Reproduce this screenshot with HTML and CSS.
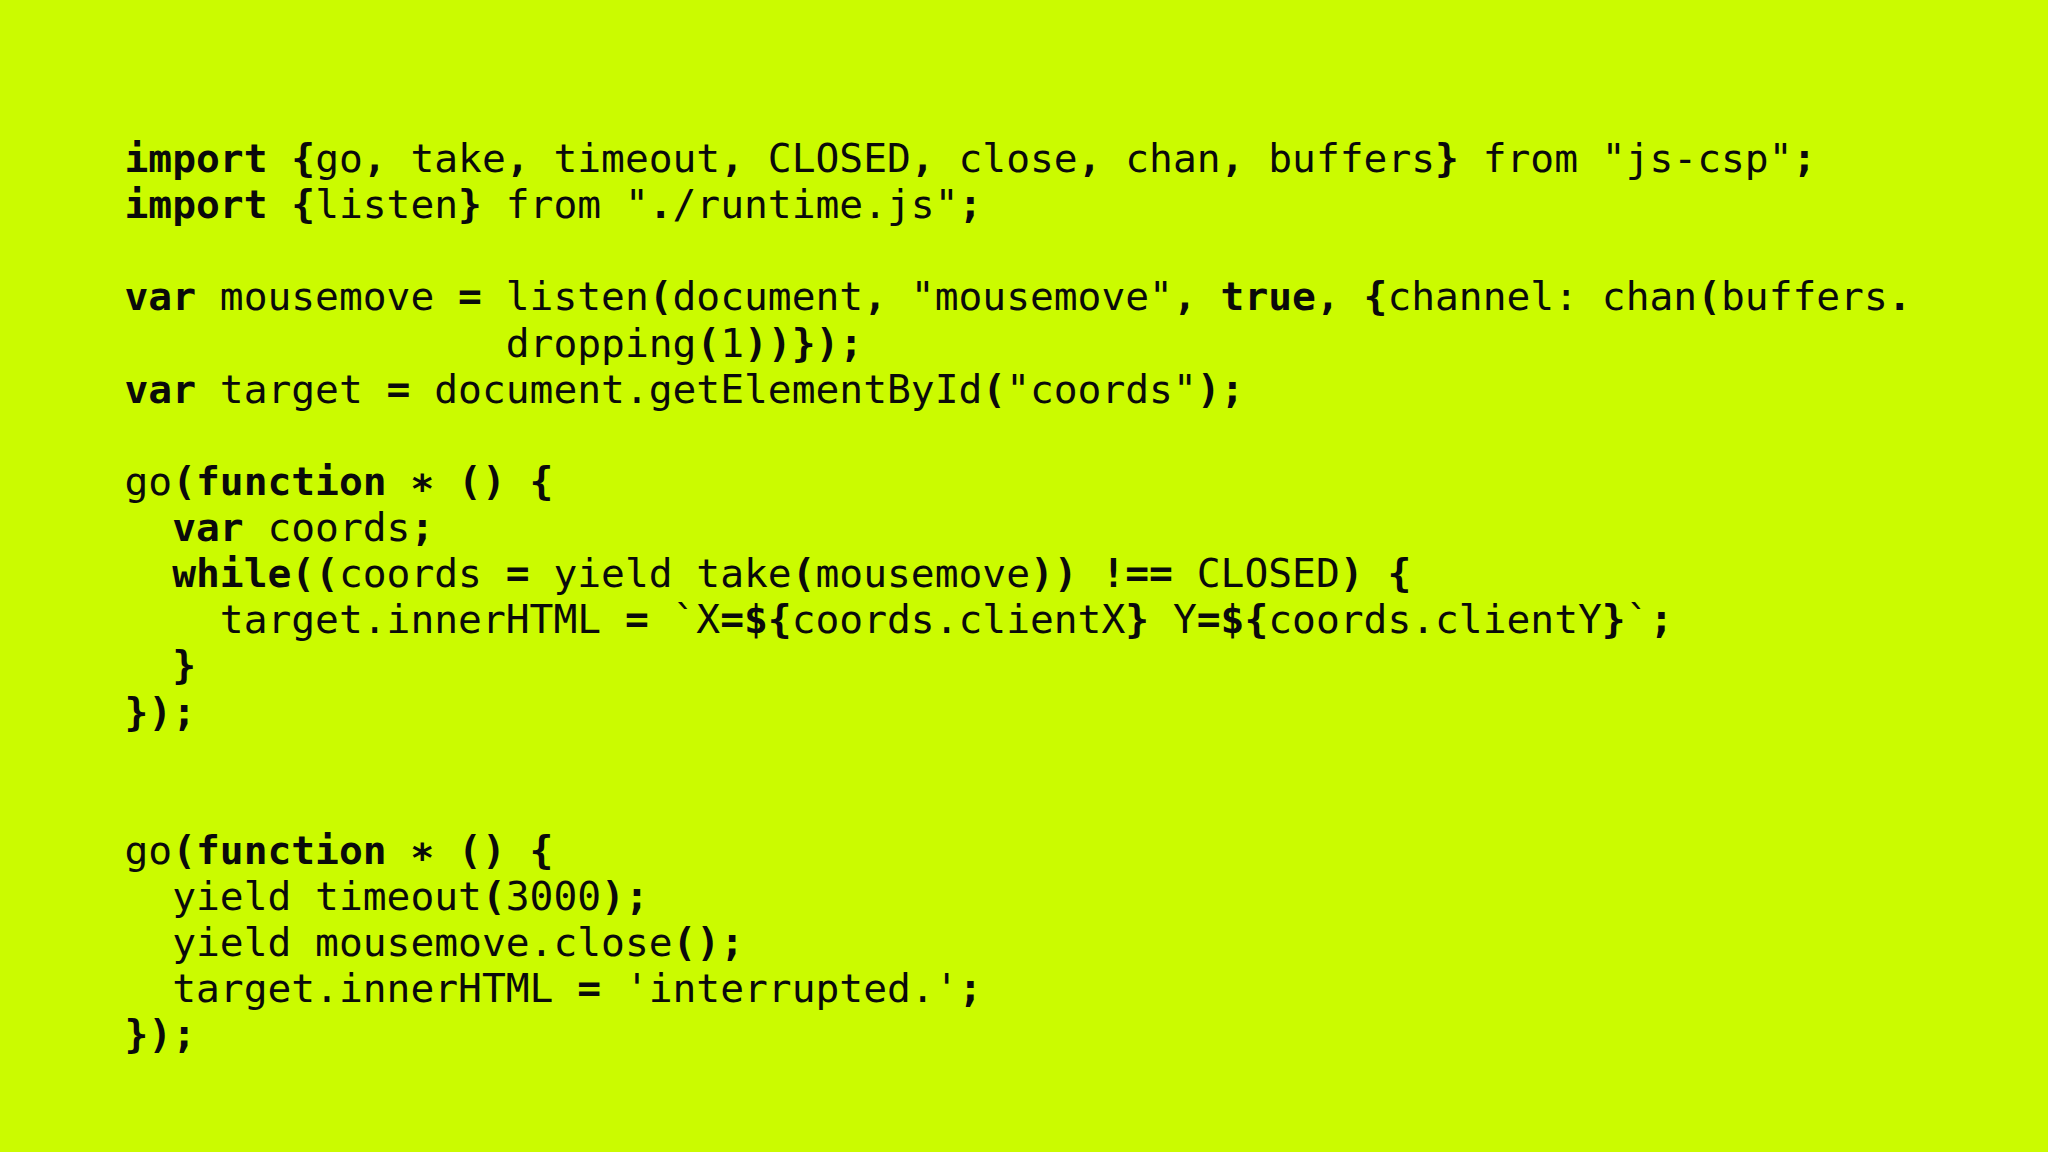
FILE: index.html
```html
<!DOCTYPE html>
<html>
<head>
<meta charset="utf-8">
<link rel="stylesheet" href="styles.css">
</head>
<body>
<main class="slide">
<pre class="code"><b>import</b> <b>{</b>go<b>,</b> take<b>,</b> timeout<b>,</b> CLOSED<b>,</b> close<b>,</b> chan<b>,</b> buffers<b>}</b> from "js-csp"<b>;</b>
<b>import</b> <b>{</b>listen<b>}</b> from "<b>.</b>/runtime.js"<b>;</b>

<b>var</b> mousemove <b>=</b> listen<b>(</b>document<b>,</b> "mousemove"<b>,</b> <b>true</b><b>,</b> <b>{</b>channel: chan<b>(</b>buffers<b>.</b>
                dropping<b>(</b>1<b>))});</b>
<b>var</b> target <b>=</b> document.getElementById<b>(</b>"coords"<b>);</b>

go<b>(function</b> <b>∗ ()</b> <b>{</b>
  <b>var</b> coords<b>;</b>
  <b>while((</b>coords <b>=</b> yield take<b>(</b>mousemove<b>))</b> <b>!==</b> CLOSED<b>)</b> <b>{</b>
    target.innerHTML <b>=</b> `X<b>=${</b>coords.clientX<b>}</b> Y<b>=${</b>coords.clientY<b>}</b>`<b>;</b>
  <b>}</b>
<b>});</b>


go<b>(function</b> <b>∗ ()</b> <b>{</b>
  yield timeout<b>(</b>3000<b>);</b>
  yield mousemove.close<b>();</b>
  target.innerHTML <b>=</b> 'interrupted.'<b>;</b>
<b>});</b></pre>
</main>
</body>
</html>
```
FILE: styles.css
```css
html, body {
  margin: 0;
  padding: 0;
  background: #cbfb00;
}
.slide {
  width: 2048px;
  height: 1152px;
  box-sizing: border-box;
  padding: 135px 0 0 124.5px;
  background: #cbfb00;
}
.code {
  margin: 0;
  font-family: "DejaVu Sans Mono", monospace;
  font-size: 39.6px;
  line-height: 46.13px;
  color: #0a0a0a;
  font-weight: normal;
}
.code b {
  font-weight: bold;
}
```
